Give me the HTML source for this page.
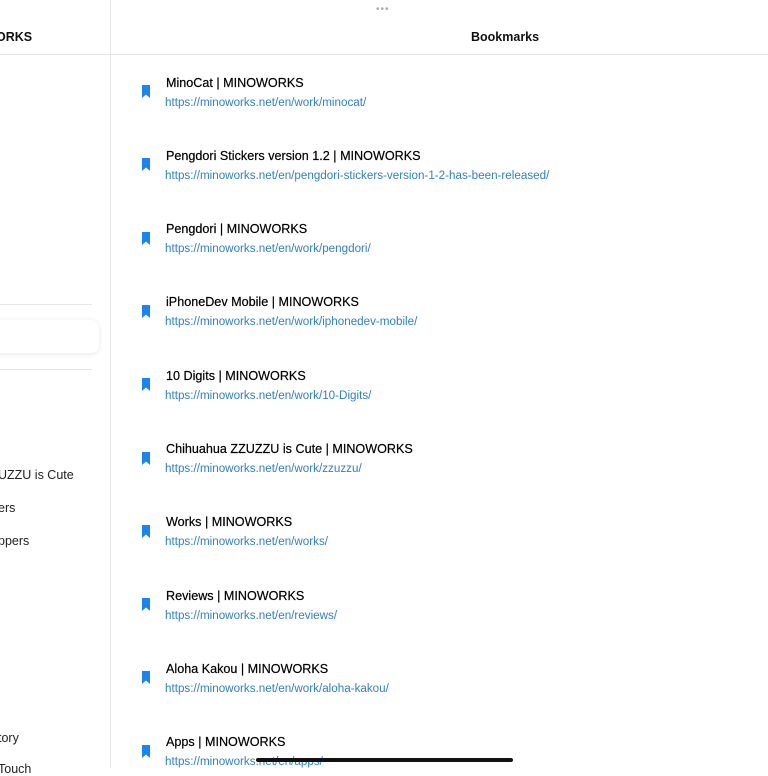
<!DOCTYPE html>
<html><head><meta charset="utf-8"><style>
body{margin:0;width:768px;height:768px;overflow:hidden;background:#fff;font-family:"Liberation Sans",sans-serif;position:relative;color:#111}
.a{position:absolute;white-space:nowrap}
.t{font-size:12.6px;color:#000;-webkit-text-stroke:0.2px #000}
.u{font-size:11.65px;color:#2f7fd0}
.s{font-size:12.5px;color:#222}
</style></head><body>
<div class="a" style="left:110px;top:0;width:1px;height:768px;background:#e6e6e6"></div>
<div class="a" style="left:0;top:54px;width:768px;height:1px;background:#e4e4e4"></div>
<div class="a" style="left:376px;top:4px;font-size:10px;color:#aaa;letter-spacing:1px">•••</div>
<div class="a" style="left:-4px;top:30px;font-size:12.5px;font-weight:bold;color:#111">ORKS</div>
<div class="a" style="left:471px;top:30px;font-size:12.5px;font-weight:bold;color:#111">Bookmarks</div>
<div class="a" style="left:0;top:304px;width:92px;height:1px;background:#e6e6e6"></div>
<div class="a" style="left:-10px;top:320px;width:109px;height:33px;background:#fff;border-radius:8px;box-shadow:0 1px 6px rgba(0,0,0,.1)"></div>
<div class="a" style="left:0;top:369px;width:92px;height:1px;background:#e6e6e6"></div>
<div class="a s" style="left:-2px;top:468px">UZZU is Cute</div>
<div class="a s" style="left:-2px;top:501px">ers</div>
<div class="a s" style="left:-2px;top:534px">ppers</div>
<div class="a s" style="left:-2px;top:731px">tory</div>
<div class="a s" style="left:-2px;top:762px">Touch</div>
<div id="list"></div>
<div class="a" style="left:256px;top:758px;width:257px;height:4px;border-radius:2px;background:#111"></div>
<script>
var d=[["MinoCat | MINOWORKS","https://minoworks.net/en/work/minocat/"],["Pengdori Stickers version 1.2 | MINOWORKS","https://minoworks.net/en/pengdori-stickers-version-1-2-has-been-released/"],["Pengdori | MINOWORKS","https://minoworks.net/en/work/pengdori/"],["iPhoneDev Mobile | MINOWORKS","https://minoworks.net/en/work/iphonedev-mobile/"],["10 Digits | MINOWORKS","https://minoworks.net/en/work/10-Digits/"],["Chihuahua ZZUZZU is Cute | MINOWORKS","https://minoworks.net/en/work/zzuzzu/"],["Works | MINOWORKS","https://minoworks.net/en/works/"],["Reviews | MINOWORKS","https://minoworks.net/en/reviews/"],["Aloha Kakou | MINOWORKS","https://minoworks.net/en/work/aloha-kakou/"],["Apps | MINOWORKS","https://minoworks.net/en/apps/"]];
var h="";d.forEach(function(r,i){var y=75.5+i*73.3;
h+='<div class="a t" style="left:166px;top:'+y+'px">'+r[0]+'</div><div class="a u" style="left:165px;top:'+(y+20)+'px">'+r[1]+'</div><svg class="a" style="left:141px;top:'+(y+9.5)+'px" width="10" height="13" viewBox="0 0 10 13"><path d="M1 0H9V13L5 9.5L1 13Z" fill="#1a84f0"/></svg>';});
document.getElementById("list").innerHTML=h;
</script>
</body></html>
